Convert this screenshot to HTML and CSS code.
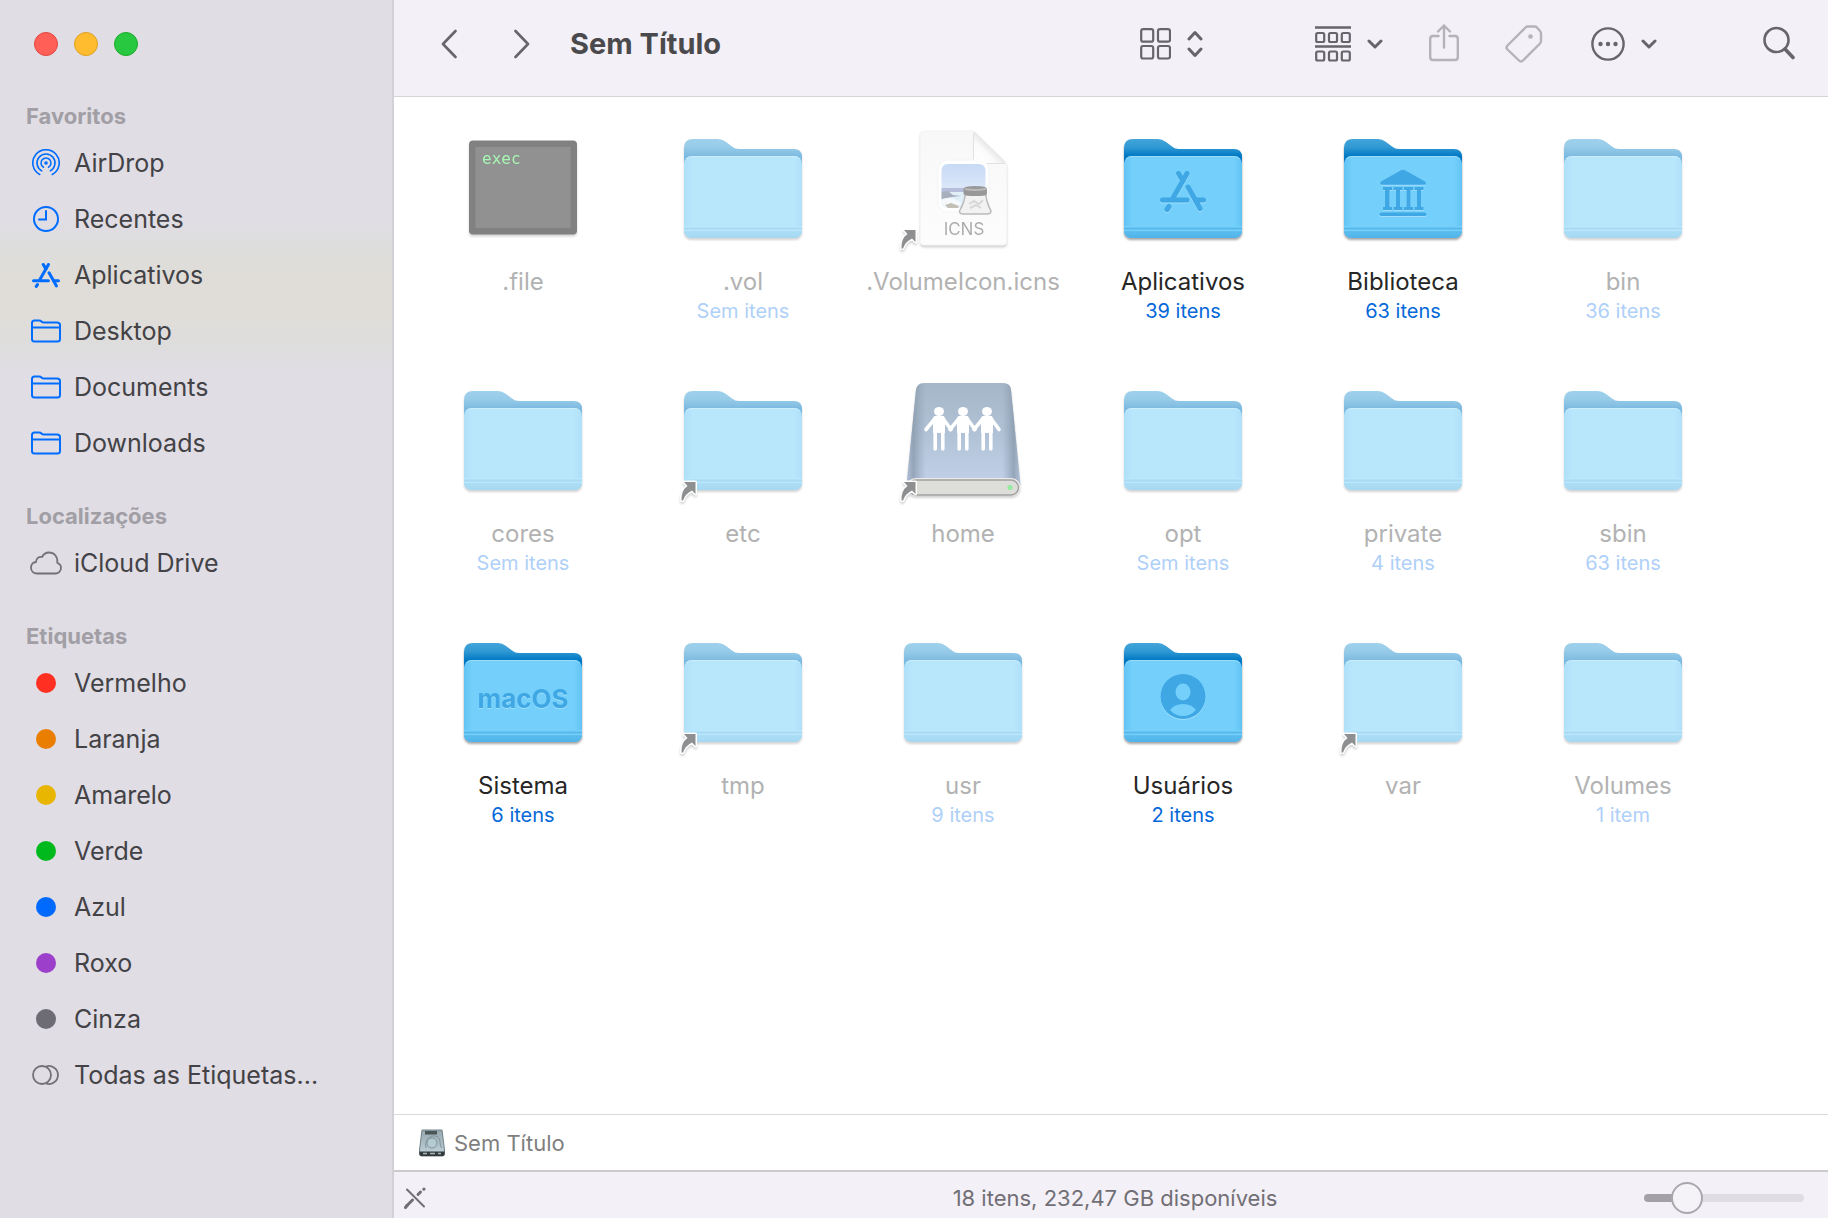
FILE: index.html
```html
<!DOCTYPE html>
<html lang="pt-BR">
<head>
    <meta charset="UTF-8">
    <meta name="viewport" content="width=device-width, initial-scale=1.0">
    <title>Sem Título</title>
    <link rel="stylesheet" href="styles.css">
</head>
<body>
    <!-- Shared icon shapes -->
    <svg class="sprite" aria-hidden="true">
        <defs>
            <linearGradient id="tab-fill" gradientUnits="userSpaceOnUse" x1="0" y1="14" x2="0" y2="31">
                <stop offset="0" stop-color="#43a5da"/>
                <stop offset="0.5" stop-color="#2f98d3"/>
                <stop offset="1" stop-color="#0079c4"/>
            </linearGradient>
            <linearGradient id="front-fill" x1="0" y1="0" x2="1" y2="0">
                <stop offset="0" stop-color="#62c3f3"/>
                <stop offset="0.07" stop-color="#74d0fb"/>
                <stop offset="0.93" stop-color="#74d0fb"/>
                <stop offset="1" stop-color="#62c3f3"/>
            </linearGradient>
            <linearGradient id="front-foot" x1="0" y1="0" x2="0" y2="1">
                <stop offset="0" stop-color="#66c5f4"/>
                <stop offset="1" stop-color="#4fb2e8"/>
            </linearGradient>
            <linearGradient id="page-fill" x1="0" y1="0" x2="0" y2="1">
                <stop offset="0" stop-color="#f2f2f2"/>
                <stop offset="1" stop-color="#fcfcfc"/>
            </linearGradient>
            <linearGradient id="fold-fill" x1="0" y1="1" x2="1" y2="0">
                <stop offset="0.1" stop-color="#ffffff"/>
                <stop offset="0.35" stop-color="#f6f6f6"/>
                <stop offset="0.52" stop-color="#cccccc"/>
            </linearGradient>
            <linearGradient id="drive-fill" x1="0" y1="0" x2="0" y2="1">
                <stop offset="0" stop-color="#4e7192"/>
                <stop offset="0.5" stop-color="#6586af"/>
                <stop offset="1" stop-color="#88a4d4"/>
            </linearGradient>
            <linearGradient id="drive-side" x1="0" y1="0" x2="1" y2="0">
                <stop offset="0" stop-color="#1b3f66" stop-opacity="0.3"/>
                <stop offset="0.06" stop-color="#0c2c50" stop-opacity="0.7"/>
                <stop offset="0.17" stop-color="#1b3f66" stop-opacity="0"/>
                <stop offset="0.84" stop-color="#1b3f66" stop-opacity="0"/>
                <stop offset="0.94" stop-color="#0c2c50" stop-opacity="0.7"/>
                <stop offset="1" stop-color="#1b3f66" stop-opacity="0.3"/>
            </linearGradient>
            <linearGradient id="disk-fill" x1="0" y1="0" x2="0" y2="1">
                <stop offset="0" stop-color="#96a8ae"/>
                <stop offset="1" stop-color="#c3d4dc"/>
            </linearGradient>
            <linearGradient id="sky-fill" x1="0" y1="0" x2="0" y2="1">
                <stop offset="0" stop-color="#93b6ee"/>
                <stop offset="1" stop-color="#b9cff2"/>
            </linearGradient>
        </defs>

        <symbol id="folder" viewBox="0 0 128 128">
            <path d="M5 45V23Q5 14 14 14H39Q43 14 47 17L53 21.500Q56 24 60 24H115Q123 24 123 32V45Z" fill="url(#tab-fill)"/>
            <rect x="5" y="31" width="118" height="82" rx="8" fill="url(#front-fill)"/>
            <path d="M5 102H123V105Q123 113 115 113H13Q5 113 5 105Z" fill="url(#front-foot)"/>
            <path d="M5 103.500H123M5 107.500H123" stroke="#58b9ec" fill="none"/>
            <path d="M5 101.500H123M5 105.500H123" stroke="#78d0fa" fill="none"/>
            <path d="M7 34Q9 31.500 13 31.500H115Q119 31.500 121 34" stroke="#9adcfb" fill="none"/>
        </symbol>

        <symbol id="alias" viewBox="0 0 128 128">
            <path d="M5 105H16.500V117L13 113.500Q6 117 4 123.500H2.500Q2 113.500 8.500 109Z" fill="#1f2124" stroke="#fff" stroke-width="3" stroke-linejoin="round" paint-order="stroke"/>
        </symbol>

        <symbol id="apps" viewBox="0 0 46 41">
            <g fill="none" stroke="currentColor" stroke-width="5" stroke-linecap="round">
                <path d="M27 2.500L13 27M18.500 2.500L23 10M28 16L40 37.500M2.500 29H27M36.500 29H43.500M9 35.500L7 38.500"/>
            </g>
        </symbol>

        <symbol id="outline-folder" viewBox="0 0 30 24">
            <g fill="none" stroke="currentColor" stroke-width="2" stroke-linejoin="round">
                <path d="M1 19V4Q1 1.500 3.500 1.500H8Q9.500 1.500 10.500 2.500L11 3Q11.500 3.500 13 3.500H26Q29 3.500 29 6V20Q29 22.500 26.500 22.500H3.500Q1 22.500 1 20Z"/>
                <path d="M1 8.500H29"/>
            </g>
        </symbol>

        <symbol id="chevron-down" viewBox="0 0 16 10">
            <path d="M2 2L8 8L14 2" fill="none" stroke="currentColor" stroke-width="3" stroke-linecap="round" stroke-linejoin="round"/>
        </symbol>
    </svg>

    <div class="finder">
        <aside class="sidebar">
            <div class="window-buttons">
                <button type="button" class="light light-close" aria-label="Fechar"></button>
                <button type="button" class="light light-minimize" aria-label="Minimizar"></button>
                <button type="button" class="light light-zoom" aria-label="Ampliar"></button>
            </div>

            <nav class="section">
                <h2>Favoritos</h2>
                <a href="#airdrop">
                    <span class="side-icon">
                        <svg width="28" height="28" viewBox="0 0 28 28" fill="none" stroke="currentColor" stroke-width="1.6" stroke-linecap="round">
                            <circle cx="14" cy="14" r="1.800" fill="currentColor" stroke="none"/>
                            <path d="M11.500 18.300A5 5 0 1 1 16.500 18.300"/>
                            <path d="M9.700 21.900A9 9 0 1 1 18.300 21.900"/>
                            <path d="M7.700 25.500A13.200 13.200 0 1 1 20.300 25.500"/>
                        </svg>
                    </span>
                    AirDrop
                </a>
                <a href="#recentes">
                    <span class="side-icon">
                        <svg width="28" height="28" viewBox="0 0 28 28" fill="none" stroke="currentColor" stroke-width="2" stroke-linecap="round">
                            <circle cx="14" cy="14" r="12"/>
                            <path d="M14 6V14.500H7"/>
                        </svg>
                    </span>
                    Recentes
                </a>
                <a href="#aplicativos">
                    <span class="side-icon"><svg width="28" height="25"><use href="#apps"/></svg></span>
                    Aplicativos
                </a>
                <a href="#desktop">
                    <span class="side-icon"><svg width="30" height="24"><use href="#outline-folder"/></svg></span>
                    Desktop
                </a>
                <a href="#documents">
                    <span class="side-icon"><svg width="30" height="24"><use href="#outline-folder"/></svg></span>
                    Documents
                </a>
                <a href="#downloads">
                    <span class="side-icon"><svg width="30" height="24"><use href="#outline-folder"/></svg></span>
                    Downloads
                </a>
            </nav>

            <nav class="section">
                <h2>Localizações</h2>
                <a href="#icloud">
                    <span class="side-icon gray">
                        <svg width="32" height="24" viewBox="0 0 32 24" fill="none" stroke="currentColor" stroke-width="1.8" stroke-linejoin="round">
                            <path d="M7 22.500C3.500 22.500 1 20 1 16.500C1 13.500 3.200 11.200 6 11C6 7.500 9 5.200 12 6C13.500 3.200 16 1.500 19 1.500C24 1.500 28 5.500 27.300 11.800C29.500 12.500 31 14.500 31 17C31 20 28.500 22.500 25.500 22.500Z"/>
                        </svg>
                    </span>
                    iCloud Drive
                </a>
            </nav>

            <nav class="section">
                <h2>Etiquetas</h2>
                <a href="#vermelho"><span class="side-icon"><span class="tag tag-red"></span></span>Vermelho</a>
                <a href="#laranja"><span class="side-icon"><span class="tag tag-orange"></span></span>Laranja</a>
                <a href="#amarelo"><span class="side-icon"><span class="tag tag-yellow"></span></span>Amarelo</a>
                <a href="#verde"><span class="side-icon"><span class="tag tag-green"></span></span>Verde</a>
                <a href="#azul"><span class="side-icon"><span class="tag tag-blue"></span></span>Azul</a>
                <a href="#roxo"><span class="side-icon"><span class="tag tag-purple"></span></span>Roxo</a>
                <a href="#cinza"><span class="side-icon"><span class="tag tag-gray"></span></span>Cinza</a>
                <a href="#todas">
                    <span class="side-icon gray">
                        <svg width="28" height="20" viewBox="0 0 28 20" fill="none" stroke="currentColor" stroke-width="1.8">
                            <circle cx="10" cy="10" r="9"/>
                            <path d="M14 1.500A9 9 0 1 1 14 18.500"/>
                        </svg>
                    </span>
                    Todas as Etiquetas...
                </a>
            </nav>
        </aside>

        <main class="content">
            <header class="toolbar">
                <div class="history">
                    <button type="button" aria-label="Voltar">
                        <svg width="16" height="30" viewBox="0 0 16 30" fill="none" stroke="currentColor" stroke-width="2.6" stroke-linecap="round" stroke-linejoin="round"><path d="M14.500 2L2 15L14.500 28"/></svg>
                    </button>
                    <button type="button" aria-label="Avançar">
                        <svg width="16" height="30" viewBox="0 0 16 30" fill="none" stroke="currentColor" stroke-width="2.6" stroke-linecap="round" stroke-linejoin="round"><path d="M1.500 2L14 15L1.500 28"/></svg>
                    </button>
                </div>
                <h1>Sem Título</h1>
                <div class="tools">
                    <button type="button" class="view-button" aria-label="Visualização">
                        <svg width="31" height="32" viewBox="0 0 31 32" fill="none" stroke="currentColor" stroke-width="2.2">
                            <rect x="1.200" y="1.200" width="12" height="12.500" rx="2"/>
                            <rect x="18" y="1.200" width="12" height="12.500" rx="2"/>
                            <rect x="1.200" y="18" width="12" height="12.500" rx="2"/>
                            <rect x="18" y="18" width="12" height="12.500" rx="2"/>
                        </svg>
                        <svg width="16" height="28" viewBox="0 0 16 28" fill="none" stroke="currentColor" stroke-width="3" stroke-linecap="round" stroke-linejoin="round"><path d="M2 9L8 2.500L14 9M2 19L8 25.500L14 19"/></svg>
                    </button>
                    <button type="button" aria-label="Agrupar">
                        <svg width="36" height="36" viewBox="0 0 36 36" fill="none" stroke="currentColor" stroke-width="2.2">
                            <path d="M0 1.500H36M0 20.500H36" stroke-width="2.6"/>
                            <rect x="1.200" y="7" width="8" height="9" rx="1.500"/>
                            <rect x="14" y="7" width="8" height="9" rx="1.500"/>
                            <rect x="26.800" y="7" width="8" height="9" rx="1.500"/>
                            <rect x="1.200" y="25.500" width="8" height="9" rx="1.500"/>
                            <rect x="14" y="25.500" width="8" height="9" rx="1.500"/>
                            <rect x="26.800" y="25.500" width="8" height="9" rx="1.500"/>
                        </svg>
                        <svg width="16" height="10"><use href="#chevron-down"/></svg>
                    </button>
                    <button type="button" disabled aria-label="Compartilhar">
                        <svg width="30" height="40" viewBox="0 0 30 40" fill="none" stroke="currentColor" stroke-width="2.400" stroke-linecap="round" stroke-linejoin="round">
                            <path d="M9.500 12H4Q1.200 12 1.200 15V33Q1.200 36 4 36H26Q28.800 36 28.800 33V15Q28.800 12 26 12H20.500M15 23.500V1.500M9 7.500L15 1.500L21 7.500"/>
                        </svg>
                    </button>
                    <button type="button" disabled aria-label="Etiquetas">
                        <svg width="40" height="40" viewBox="0 0 40 40" fill="none" stroke="currentColor" stroke-width="2.400" stroke-linejoin="round">
                            <path d="M20.500 3.500Q21.500 2.500 23 2.500H29.500Q31 2.500 32 3.500L35 7Q36 8 36 9.500V17Q36 18.500 35 19.500L18 36.500Q16 38.500 14 36.500L2.500 25.500Q.5 23.500 2.500 21.500Z"/>
                            <circle cx="25.500" cy="12.500" r="2.300" fill="currentColor" stroke="none"/>
                        </svg>
                    </button>
                    <button type="button" class="more-button" aria-label="Mais">
                        <svg width="34" height="36" viewBox="0 0 34 36" fill="none" stroke="currentColor" stroke-width="2.400">
                            <circle cx="17" cy="18" r="15.600"/>
                            <g fill="currentColor" stroke="none"><circle cx="9.500" cy="18" r="2.200"/><circle cx="17" cy="18" r="2.200"/><circle cx="24.500" cy="18" r="2.200"/></g>
                        </svg>
                        <svg width="16" height="10"><use href="#chevron-down"/></svg>
                    </button>
                    <button type="button" aria-label="Buscar">
                        <svg width="32" height="36" viewBox="0 0 32 36" fill="none" stroke="currentColor" stroke-width="2.600" stroke-linecap="round">
                            <circle cx="13.500" cy="14" r="12"/>
                            <path d="M22 23L30 31.500" stroke-width="3.600"/>
                        </svg>
                    </button>
                </div>
            </header>

            <ul class="files">
                <li><a href="#file" class="item hidden-item">
                    <svg class="icon" viewBox="0 0 128 128">
                        <rect x="10" y="15.500" width="108" height="94" rx="4" fill="#060606"/>
                        <rect x="16.500" y="22" width="95" height="81" fill="#252525"/>
                        <text x="23" y="39" class="exec-text">exec</text>
                    </svg>
                    <span class="name">.file</span>
                </a></li>
                <li><a href="#vol" class="item hidden-item">
                    <svg class="icon" viewBox="0 0 128 128"><use href="#folder"/></svg>
                    <span class="name">.vol</span>
                    <span class="count">Sem itens</span>
                </a></li>
                <li><a href="#volumeicon" class="item hidden-item">
                    <svg class="icon" viewBox="0 0 128 128">
                        <path d="M25 6H75L107.500 38V117Q107.500 120 104 120H25Q21.500 120 21.500 117V9Q21.500 6 25 6Z" fill="url(#page-fill)" stroke="#ececec"/>
                        <path d="M75 6V33Q75 38 80 38H107.500Z" fill="url(#fold-fill)"/>
                        <path d="M74.500 8V33Q74.500 38.500 80 38.500H106" fill="none" stroke="#c4c4c4"/>
                        <rect x="39" y="35" width="51" height="52" rx="10" fill="#fff" stroke="#ebebeb"/>
                        <path d="M75 20V33Q75 38 80 38H92L80 26Z" fill="#fdfdfd"/>
                        <path d="M42.500 63V46Q42.500 39 49.500 39H79.500Q86.500 39 86.500 46V63Z" fill="url(#sky-fill)"/>
                        <path d="M42.500 63H86.500V76Q86.500 83 79.500 83H49.500Q42.500 83 42.500 76Z" fill="#c3e0f2"/>
                        <path d="M42.500 63H70V67H42.500Z" fill="#6f7fb9"/>
                        <path d="M42.500 67L49 66L54 70L62 71L53 72L42.500 74Z" fill="#52617e"/>
                        <path d="M42.500 75Q52 70 62 78L60 83H50Q43 82 42.500 75Z" fill="#eef5f9"/>
                        <path d="M46 80L52 78L60 81L59 83H49Z" fill="#8a8170"/>
                        <path d="M66 70H87Q87 76 92 86Q92 89 88 89H64Q60.500 89 60.500 86Q66 76 66 70Z" fill="#e6e6e6" stroke="#777" stroke-width="1.500"/>
                        <path d="M70 79L75 76L80 79L84 75M71 83L77 80L82 83" fill="none" stroke="#b2b2b2" stroke-width="2"/>
                        <path d="M64.500 64Q64.500 61 76 61Q88 61 88 64V69Q86 71 76 71Q67 71 64.500 69Z" fill="#333"/>
                        <path d="M66 64Q76 66 87 64" fill="none" stroke="#777" stroke-width="2"/>
                        <text x="65" y="110" class="icns-text">ICNS</text>
                        <use href="#alias"/>
                    </svg>
                    <span class="name">.VolumeIcon.icns</span>
                </a></li>
                <li><a href="#apps-folder" class="item">
                    <svg class="icon" viewBox="0 0 128 128">
                        <use href="#folder"/>
                        <use href="#apps" class="emblem" x="41" y="46" width="46" height="41"/>
                    </svg>
                    <span class="name">Aplicativos</span>
                    <span class="count">39 itens</span>
                </a></li>
                <li><a href="#biblioteca" class="item">
                    <svg class="icon" viewBox="0 0 128 128">
                        <use href="#folder"/>
                        <g class="emblem" fill="currentColor">
                            <path d="M62 45.300Q64 44.100 66 45.300L86 56.500Q87 57.500 87 58.500Q87 59.800 85.500 59.800H42.500Q41.200 59.800 41.200 58.500Q41.200 57.500 42 56.500Z"/>
                            <path d="M44 62h9v3h-2.500v17H53v3h-9v-3h2V65h-2zM54.500 62h9v3H61v17h2.500v3h-9v-3H57V65h-2.500zM65 62h9v3h-2.500v17H74v3h-9v-3h2.500V65H65zM75.500 62h9v3H82v17h2.500v3h-9v-3H78V65h-2.500z"/>
                            <rect x="40.500" y="87.500" width="47" height="3.500" rx="1.700"/>
                        </g>
                    </svg>
                    <span class="name">Biblioteca</span>
                    <span class="count">63 itens</span>
                </a></li>
                <li><a href="#bin" class="item hidden-item">
                    <svg class="icon" viewBox="0 0 128 128"><use href="#folder"/></svg>
                    <span class="name">bin</span>
                    <span class="count">36 itens</span>
                </a></li>

                <li><a href="#cores" class="item hidden-item">
                    <svg class="icon" viewBox="0 0 128 128"><use href="#folder"/></svg>
                    <span class="name">cores</span>
                    <span class="count">Sem itens</span>
                </a></li>
                <li><a href="#etc" class="item hidden-item">
                    <svg class="icon" viewBox="0 0 128 128"><use href="#folder"/><use href="#alias"/></svg>
                    <span class="name">etc</span>
                </a></li>
                <li><a href="#home" class="item hidden-item">
                    <svg class="icon" viewBox="0 0 128 128">
                        <path d="M25 6H104Q111.500 6 112 13L121.500 108H7.500L17 13Q18 6 25 6Z" fill="url(#drive-fill)"/>
                        <path d="M25 6H104Q111.500 6 112 13L121.500 108H7.500L17 13Q18 6 25 6Z" fill="url(#drive-side)"/>
                        <rect x="7.500" y="101" width="114" height="18" rx="9" fill="#d7d7d2"/>
                        <rect x="9.500" y="103" width="110" height="15" rx="7.500" fill="#bdbcb4" stroke="#444" stroke-width="1.400"/>
                        <circle cx="111" cy="110.500" r="2.600" fill="#2fd944"/>
                        <g id="person" fill="#fff">
                            <ellipse cx="40" cy="34.500" rx="5" ry="4.500"/>
                            <path d="M35 39H45L46 42V56H34V42Z"/>
                            <path d="M36 41.500L27 52.500M44 41.500L52 52.500M36.200 55V72M43.800 55V72" stroke="#fff" stroke-width="3.600" stroke-linecap="round"/>
                        </g>
                        <use href="#person" x="24"/>
                        <use href="#person" x="48"/>
                        <use href="#alias"/>
                    </svg>
                    <span class="name">home</span>
                </a></li>
                <li><a href="#opt" class="item hidden-item">
                    <svg class="icon" viewBox="0 0 128 128"><use href="#folder"/></svg>
                    <span class="name">opt</span>
                    <span class="count">Sem itens</span>
                </a></li>
                <li><a href="#private" class="item hidden-item">
                    <svg class="icon" viewBox="0 0 128 128"><use href="#folder"/></svg>
                    <span class="name">private</span>
                    <span class="count">4 itens</span>
                </a></li>
                <li><a href="#sbin" class="item hidden-item">
                    <svg class="icon" viewBox="0 0 128 128"><use href="#folder"/></svg>
                    <span class="name">sbin</span>
                    <span class="count">63 itens</span>
                </a></li>

                <li><a href="#sistema" class="item">
                    <svg class="icon" viewBox="0 0 128 128">
                        <use href="#folder"/>
                        <text x="64" y="79" class="emblem macos-text">macOS</text>
                    </svg>
                    <span class="name">Sistema</span>
                    <span class="count">6 itens</span>
                </a></li>
                <li><a href="#tmp" class="item hidden-item">
                    <svg class="icon" viewBox="0 0 128 128"><use href="#folder"/><use href="#alias"/></svg>
                    <span class="name">tmp</span>
                </a></li>
                <li><a href="#usr" class="item hidden-item">
                    <svg class="icon" viewBox="0 0 128 128"><use href="#folder"/></svg>
                    <span class="name">usr</span>
                    <span class="count">9 itens</span>
                </a></li>
                <li><a href="#usuarios" class="item">
                    <svg class="icon" viewBox="0 0 128 128">
                        <use href="#folder"/>
                        <g class="emblem">
                            <circle cx="64" cy="67.500" r="22.500" fill="currentColor"/>
                            <ellipse cx="64" cy="63" rx="7.500" ry="8.500" fill="#74d0fb"/>
                            <path d="M51 81Q55.500 75 64 75Q72.500 75 77 81Q71.500 87 64 87Q56.500 87 51 81Z" fill="#74d0fb"/>
                        </g>
                    </svg>
                    <span class="name">Usuários</span>
                    <span class="count">2 itens</span>
                </a></li>
                <li><a href="#var" class="item hidden-item">
                    <svg class="icon" viewBox="0 0 128 128"><use href="#folder"/><use href="#alias"/></svg>
                    <span class="name">var</span>
                </a></li>
                <li><a href="#volumes" class="item hidden-item">
                    <svg class="icon" viewBox="0 0 128 128"><use href="#folder"/></svg>
                    <span class="name">Volumes</span>
                    <span class="count">1 item</span>
                </a></li>
            </ul>

            <div class="path-bar">
                <svg width="28" height="28" viewBox="0 0 28 28">
                    <path d="M4 1H24L26.500 21V25Q26.500 27 24.500 27H3.500Q1.500 27 1.500 25V21Z" fill="url(#disk-fill)" stroke="#718087"/>
                    <path d="M1.500 22.500H26.500V25Q26.500 27 24.500 27H3.500Q1.500 27 1.500 25Z" fill="#353b3d"/>
                    <rect x="7" y="2" width="12" height="3.500" fill="#4a5558"/>
                    <circle cx="14" cy="14" r="5" fill="#b5cbd4" stroke="#82949c"/>
                    <path d="M8 19Q6 10 14 7Q22 6 22 13Q22 18 24 19" fill="none" stroke="#82949c"/>
                    <path d="M5 24.500H9M12 24.500H17M20 24.500H23" stroke="#a9b4b8" stroke-width="1.500"/>
                </svg>
                <span>Sem Título</span>
            </div>

            <footer class="status-bar">
                <svg width="22" height="22" viewBox="0 0 22 22" fill="none" stroke="currentColor" stroke-linecap="round">
                    <path d="M3 2.500L20 19.500" stroke-width="2"/>
                    <path d="M3 18.500L8.500 13M14 7.500L16.500 5" stroke-width="3"/>
                    <path d="M1.500 20.500L3 18.500M19.800 2.200L20 2" stroke-width="3"/>
                </svg>
                <p>18 itens, 232,47 GB disponíveis</p>
                <input type="range" min="0" max="100" value="21" aria-label="Tamanho dos ícones">
            </footer>
        </main>
    </div>
</body>
</html>
```
FILE: styles.css
```css
* {
    box-sizing: border-box;
}

body {
    margin: 0;
    font-family: Inter, "Liberation Sans", sans-serif;
    font-size: 25px;
    color: #434246;
    background-color: #fff;
}

a {
    color: inherit;
    text-decoration: none;
}

button {
    padding: 0;
    border: none;
    background: none;
    color: inherit;
    font: inherit;
}

h1, h2, p, ul {
    margin: 0;
    padding: 0;
}

svg {
    display: block;
    flex-shrink: 0;
}

.sprite {
    position: absolute;
    width: 0;
    height: 0;
}

.finder {
    display: flex;
    min-height: 100vh;
}

/* Sidebar */
.sidebar {
    width: 394px;
    flex-shrink: 0;
    border-right: 2px solid #d3d0d6;
    background-color: #e0dde4;
    background-image: linear-gradient(#e0dde4 220px, #dddddc 250px, #e0ddd8 280px, #e0ddd8 310px, #dedddd 345px, #e0dde4 375px);
}

.window-buttons {
    display: flex;
    gap: 16px;
    height: 97px;
    padding: 32px 34px 0;
}

.light {
    width: 24px;
    height: 24px;
    border: 1px solid;
    border-radius: 50%;
}

.light-close {
    background-color: #ff5f57;
    border-color: #e2463f;
}

.light-minimize {
    background-color: #febc2e;
    border-color: #dfa023;
}

.light-zoom {
    background-color: #28c840;
    border-color: #1aab29;
}

.section {
    margin-bottom: 26px;
}

.section h2 {
    padding-left: 26px;
    font-size: 22px;
    font-weight: 700;
    line-height: 38px;
    color: #a19fa5;
}

.section a {
    display: flex;
    align-items: center;
    gap: 12px;
    height: 56px;
    padding-left: 30px;
}

.side-icon {
    display: flex;
    justify-content: center;
    width: 32px;
    color: #006dff;
}

.side-icon.gray {
    color: #737177;
}

.tag {
    width: 20px;
    height: 20px;
    border-radius: 50%;
}

.tag-red { background-color: #ff3021; }
.tag-orange { background-color: #e97e00; }
.tag-yellow { background-color: #e8b500; }
.tag-green { background-color: #00b91c; }
.tag-blue { background-color: #006aff; }
.tag-purple { background-color: #9c3fcb; }
.tag-gray { background-color: #6d6c74; }

/* Main column */
.content {
    display: flex;
    flex: 1;
    flex-direction: column;
    min-width: 0;
}

.toolbar {
    display: flex;
    align-items: center;
    height: 97px;
    padding: 0 33px 9px 47px;
    border-bottom: 1px solid #d6d4d8;
    background-color: #f3f0f7;
    color: #67646c;
}

.history {
    display: flex;
    gap: 57px;
}

.toolbar h1 {
    margin-left: 40px;
    font-size: 29px;
    font-weight: 700;
    color: #4a494c;
}

.tools {
    display: flex;
    align-items: center;
    gap: 46px;
    margin-left: auto;
}

.tools button {
    display: flex;
    align-items: center;
    gap: 16px;
}

.tools button:disabled {
    color: #b5b2b9;
}

.tools .view-button {
    margin-right: 66px;
}

.tools .more-button {
    margin-right: 60px;
}

/* Icon grid */
.files {
    display: grid;
    flex: 1;
    grid-template-columns: repeat(auto-fill, 220px);
    align-content: start;
    row-gap: 52px;
    padding: 28px 0 28px 19px;
    list-style: none;
}

.item {
    display: flex;
    flex-direction: column;
    align-items: center;
    color: #262626;
}

.icon {
    width: 128px;
    height: 128px;
    margin-bottom: 13px;
    filter: drop-shadow(0 2px 1px rgba(0, 0, 0, 0.35));
}

.name {
    font-size: 24px;
    line-height: 32px;
}

.count {
    font-size: 20px;
    line-height: 27px;
    color: #0568d9;
}

.hidden-item .icon {
    opacity: 0.5;
}

.hidden-item .name {
    color: #b2b2b2;
}

.hidden-item .count {
    color: #afd0f8;
}

.emblem {
    color: #3fa7e3;
    filter: drop-shadow(0 1px 0 rgba(255, 255, 255, 0.3));
}

.exec-text {
    font: 16px "DejaVu Sans Mono", monospace;
    fill: #51f16b;
}

.icns-text {
    font-size: 17px;
    text-anchor: middle;
    fill: #5c5c5c;
}

.macos-text {
    font-size: 26px;
    font-weight: 700;
    text-anchor: middle;
    fill: #3fa7e3;
}

/* Bottom bars */
.path-bar {
    display: flex;
    align-items: center;
    gap: 8px;
    height: 56px;
    padding-left: 24px;
    border-top: 1px solid #dadada;
    font-size: 22px;
    color: #7f7f7f;
}

.status-bar {
    display: flex;
    align-items: center;
    justify-content: space-between;
    height: 48px;
    padding: 6px 24px 0 10px;
    border-top: 2px solid #cbc9ce;
    background-color: #f3f0f7;
    font-size: 22px;
    color: #716f75;
}

.status-bar svg {
    margin-right: 160px;
}

.status-bar input {
    width: 160px;
    height: 32px;
    margin: 0;
    appearance: none;
    background: none;
}

.status-bar input::-webkit-slider-runnable-track {
    height: 8px;
    border-radius: 4px;
    background: linear-gradient(to right, #a3a1a7 25%, #dfdce3 25%);
}

.status-bar input::-webkit-slider-thumb {
    width: 32px;
    height: 32px;
    margin-top: -12px;
    appearance: none;
    border: 2px solid #aaa8ad;
    border-radius: 50%;
    background-color: #f5f3f8;
}
```
